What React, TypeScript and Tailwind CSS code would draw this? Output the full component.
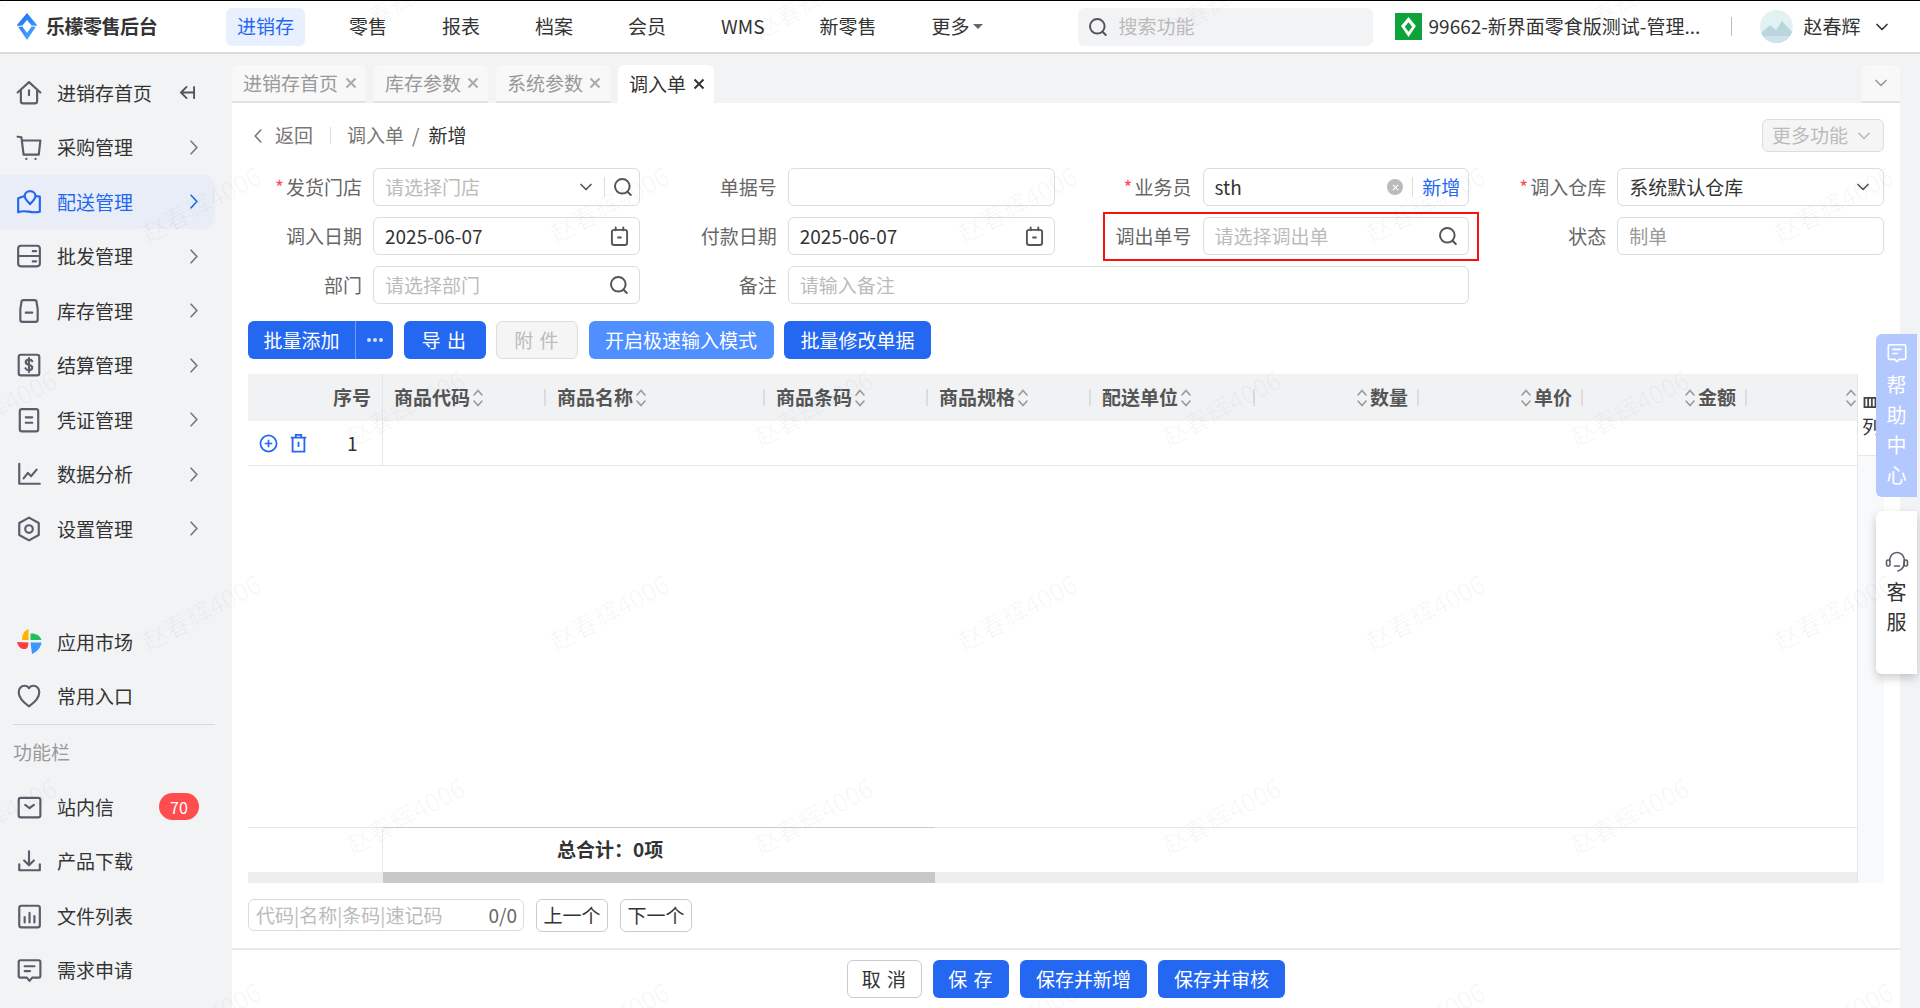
import React from "react";

const stroke = {
  fill: "none",
  stroke: "currentColor",
  strokeWidth: 2,
  strokeLinecap: "round" as const,
  strokeLinejoin: "round" as const,
};

const Svg = ({ children, className = "-ml-[1px] size-[26px]" }: { children: React.ReactNode; className?: string }) => (
  <svg viewBox="0 0 24 24" className={className} {...stroke}>
    {children}
  </svg>
);

const Chevron = ({ className = "size-[20px]" }: { className?: string }) => (
  <Svg className={className}>
    <path d="M6 9l6 6 6-6" />
  </Svg>
);

const ChevronRight = () => (
  <svg viewBox="0 0 12 20" className="h-[17px] w-[10px]" {...stroke}>
    <path d="M2.5 2.5l7 7.5-7 7.5" />
  </svg>
);

const Search = ({ className = "size-[20px]" }: { className?: string }) => (
  <svg viewBox="0 0 20 20" className={className} {...stroke}>
    <circle cx="9.3" cy="9.3" r="7.3" />
    <path d="M14.8 15l3 3" />
  </svg>
);

const Calendar = () => (
  <svg viewBox="0 0 20 22" className="h-[21px] w-[19px]" {...stroke}>
    <rect x="2" y="4" width="16" height="16" rx="2.5" />
    <path d="M6 1.5v3M14 1.5v3M8.5 12h3" />
  </svg>
);

const Close = ({ className = "" }: { className?: string }) => (
  <svg viewBox="0 0 12 12" className={`size-[12px] ${className}`} fill="none" stroke="currentColor" strokeWidth="2">
    <path d="M1.5 1.5l9 9M10.5 1.5l-9 9" />
  </svg>
);

const Sort = () => (
  <svg viewBox="0 0 11 20" className="h-[20px] w-[12px] shrink-0 text-[#999]" fill="none" stroke="currentColor" strokeWidth="1.6" strokeLinecap="round">
    <path d="M1.5 7l4-4.500 4 4.500M1.500 13l4 4.500 4-4.500" />
  </svg>
);

const icons: Record<string, React.ReactNode> = {
  home: <path d="M1.500 11.500L12 2l10.500 9.500M4.500 9.500v10a2 2 0 002 2h11a2 2 0 002-2v-10M12 9.500v4.500" />,
  cart: (
    <>
      <path d="M1.500 2.500l3.500.5 2 16h14l1.500-13H6" />
      <path d="M9.500 23h.1M18 23h.1" />
    </>
  ),
  map: (
    <>
      <path d="M8 6.500L2 8.500v13c7-3 11 1.500 20-.5V7l-4-.5" />
      <path d="M13 2c2.800 0 5 2 5 4.500 0 2.700-2.700 5-5 7.500-2.300-2.500-5-4.800-5-7.500C8 4 10.200 2 13 2z" />
    </>
  ),
  server: (
    <>
      <rect x="2" y="2.500" width="20" height="19" rx="2.500" />
      <path d="M2 12h20M15.500 7.500h3M15.500 17h3" />
    </>
  ),
  box: (
    <>
      <path d="M4 10l1-6a2 2 0 012-2h10a2 2 0 012 2l1 6v10a2 2 0 01-2 2H6a2 2 0 01-2-2z" />
      <path d="M9 13.500h6" />
    </>
  ),
  dollar: (
    <>
      <rect x="2.500" y="2.500" width="19" height="19" rx="2" />
      <path d="M15 8.500c-.5-1-1.500-1.500-3-1.500-2 0-3 1-3 2.400 0 3.100 6 1.800 6 5 0 1.500-1.300 2.400-3 2.400-1.600 0-2.700-.6-3.200-1.700M12 5.500v13" />
    </>
  ),
  doc: (
    <>
      <rect x="3.500" y="2" width="17" height="20.500" rx="2" />
      <path d="M9 9.500h6M9 14.500h6" />
    </>
  ),
  chart: <path d="M3 2.500V21h19M7 16l4-5 3 3 5-6" />,
  gear: (
    <>
      <path d="M12 1.500l9 5v11l-9 5-9-5v-11z" />
      <circle cx="12" cy="12" r="3.500" />
    </>
  ),
  heart: <path d="M12 21.500C7 18 2.500 13.500 2.500 8.500 2.500 5 5 2.500 8 2.500c1.700 0 3.200.8 4 2.300.8-1.500 2.300-2.300 4-2.300 3 0 5.500 2.500 5.500 6 0 5-4.500 9.500-9.500 13z" />,
  mail: (
    <>
      <rect x="2.500" y="3.500" width="20" height="18" rx="2" />
      <path d="M8.500 10l4 3 4-3" />
    </>
  ),
  download: <path d="M12 3v13M7.500 11.500L12 16l4.500-4.500M3 15v5.500h19V15" />,
  bars: (
    <>
      <rect x="3" y="2.500" width="19" height="20" rx="2" />
      <path d="M8 13v5M12.500 9v9M17 12v6" />
    </>
  ),
  comment: (
    <>
      <path d="M4 3h17a1.500 1.500 0 011.500 1.500v13A1.500 1.500 0 0121 19h-6l-2.500 3L10 19H4a1.500 1.500 0 01-1.500-1.500v-13A1.500 1.500 0 014 3z" />
      <path d="M8 8.500h9M8 13h5" />
    </>
  ),
};

const Pinwheel = () => (
  <svg viewBox="0 0 25 25" className="size-[25px]">
    <path d="M11.500 11V0C7 1.500 5 6 5 11z" fill="#ffb300" />
    <path d="M13.500 11V4.500c4.500-.5 9.500 1.500 11 6.500z" fill="#22c05a" />
    <path d="M13.500 13.500H24.500c-.5 4.500-4 9-9.500 11.500z" fill="#3a98ff" />
    <path d="M11.500 13.500c0 3-1 6-3 6.500-3.500.5-7-1-8.500-7z" fill="#ff3b3b" />
  </svg>
);

// same leaf mark is used by both logos, hollow diamond in the middle
const leaf = "M10 0L20 12 10 27 0 12zM10 7L5 13l5 7 5-7z";

const menu = [
  { key: "home", label: "进销存首页", collapse: true },
  { key: "cart", label: "采购管理" },
  { key: "map", label: "配送管理", active: true },
  { key: "server", label: "批发管理" },
  { key: "box", label: "库存管理" },
  { key: "dollar", label: "结算管理" },
  { key: "doc", label: "凭证管理" },
  { key: "chart", label: "数据分析" },
  { key: "gear", label: "设置管理" },
];

const SideItem = ({
  icon,
  label,
  active,
  arrow,
  children,
}: {
  icon: React.ReactNode;
  label: string;
  active?: boolean;
  arrow?: boolean;
  children?: React.ReactNode;
}) => (
  <div
    className={`flex h-[54.500px] w-[215px] items-center rounded-r-xl pl-[17px] ${
      active ? "bg-[#e8edf7] text-[#2468f2]" : "text-[#333]"
    }`}
  >
    <span className={`flex w-[40px] shrink-0 ${active ? "" : "text-[#5a5e6b]"}`}>{icon}</span>
    <span className="flex-1">{label}</span>
    {children}
    {arrow && (
      <span className={`mr-[16px] ${active ? "text-[#2468f2]" : "text-[#777]"}`}>
        <ChevronRight />
      </span>
    )}
  </div>
);

const Sidebar = () => (
  <aside className="flex w-[232px] shrink-0 flex-col bg-[#f2f3f5] pt-[11.500px]">
    {menu.map((m) => (
      <SideItem key={m.key} icon={<Svg>{icons[m.key]}</Svg>} label={m.label} active={m.active} arrow={!m.collapse}>
        {m.collapse && (
          <svg viewBox="0 0 18 16" className="mr-[19px] h-[15px] w-[17px] text-[#555]" {...stroke}>
            <path d="M8 2L2 8l6 6M2 8h13M16 2v12" />
          </svg>
        )}
      </SideItem>
    ))}
    <div className="h-[58.500px]" />
    <SideItem icon={<Pinwheel />} label="应用市场" />
    <SideItem icon={<Svg>{icons.heart}</Svg>} label="常用入口" />
    <div className="ml-[13px] h-px w-[202px] bg-[#d9d9d9]" />
    <div className="flex h-[55px] items-center pl-[13px] text-[#999]">功能栏</div>
    <SideItem icon={<Svg>{icons.mail}</Svg>} label="站内信">
      <span className="mr-[16px] flex h-[27px] w-[40px] items-center justify-center rounded-full bg-[#ff4d4f] text-[16px] text-white">
        70
      </span>
    </SideItem>
    <SideItem icon={<Svg>{icons.download}</Svg>} label="产品下载" />
    <SideItem icon={<Svg>{icons.bars}</Svg>} label="文件列表" />
    <SideItem icon={<Svg>{icons.comment}</Svg>} label="需求申请" />
  </aside>
);

const navItems = ["零售", "报表", "档案", "会员", "WMS", "新零售"];

const Header = () => (
  <header className="flex h-[54px] shrink-0 items-center border-t border-b-2 border-t-black border-b-[#dcdcdc] bg-white pl-[17px]">
    <svg viewBox="0 0 20 27" className="h-[27px] w-[20px] shrink-0">
      <defs>
        <linearGradient id="logo" x1="0" y1="0" x2="0.6" y2="1">
          <stop offset="0" stopColor="#1f66ee" />
          <stop offset="1" stopColor="#46a6ff" />
        </linearGradient>
      </defs>
      <path d={leaf} fill="url(#logo)" fillRule="evenodd" />
      <path d="M0 13.500l5-.5M20 13.500l-5-.5" stroke="#fff" strokeWidth="1.200" />
    </svg>
    <span className="ml-[9px] w-[180px] text-[19px] font-bold tracking-tight text-[#333]">乐檬零售后台</span>
    <nav className="flex items-center gap-[33px]">
      <span className="flex h-[38px] items-center rounded-md bg-[#e8effd] px-[11px] text-[#2468f2]">进销存</span>
      {navItems.map((n) => (
        <span key={n} className="px-[11px] text-[#333]">
          {n}
        </span>
      ))}
      <span className="flex items-center px-[11px] text-[#333]">
        更多
        <span className="ml-[3px] size-0 border-x-[5px] border-t-[5px] border-x-transparent border-t-[#666]" />
      </span>
    </nav>
    <div className="ml-[84px] flex h-[38px] w-[295px] items-center gap-[11px] rounded-md bg-[#f2f3f5] pl-[10px] text-[#bbb]">
      <span className="text-[#555]">
        <Search />
      </span>
      搜索功能
    </div>
    <span className="ml-[22px] flex size-[27px] items-center justify-center bg-[#0ea33a]">
      <svg viewBox="0 0 20 27" className="h-[20px] w-[15px]">
        <path d={leaf} fill="#fff" fillRule="evenodd" />
      </svg>
    </span>
    <span className="ml-[7px] w-[271px] whitespace-nowrap text-[#333]">99662-新界面零食版测试-管理...</span>
    <span className="ml-[31px] h-[19px] w-px bg-[#bbb]" />
    <svg viewBox="0 0 33 33" className="ml-[28px] size-[33px]">
      <defs>
        <clipPath id="avatar">
          <circle cx="16.500" cy="16.500" r="16.500" />
        </clipPath>
      </defs>
      <g clipPath="url(#avatar)">
        <rect width="33" height="33" fill="#e4f1f2" />
        <path d="M0 24l10-9 6 5 6-9 11 12v10H0z" fill="#b9d6de" />
        <rect y="26" width="33" height="7" fill="#cfe4ea" />
      </g>
    </svg>
    <span className="ml-[11px] text-[#333]">赵春辉</span>
    <span className="ml-[11px] text-[#333]">
      <Chevron />
    </span>
  </header>
);

const tabs = [
  { label: "进销存首页", w: "w-[134px]" },
  { label: "库存参数", w: "w-[114px]" },
  { label: "系统参数", w: "w-[114px]" },
];

const Tabs = () => (
  <div className="flex h-[38px] shrink-0 items-stretch gap-[8px]">
    {tabs.map((t) => (
      <div
        key={t.label}
        className={`flex ${t.w} items-center justify-between rounded-t-md border-b-2 border-[#e2e2e2] bg-[#f8f8f8] pl-[11px] pr-[9px] text-[#999]`}
      >
        {t.label}
        <Close className="text-[#aaa]" />
      </div>
    ))}
    <div className="flex w-[96px] items-center justify-between rounded-t-md bg-white pl-[11px] pr-[9px] text-[#333]">
      调入单
      <Close className="text-[#333]" />
    </div>
    <div className="ml-auto flex w-[38px] items-center justify-center rounded-t-md border-b-2 border-[#e2e2e2] bg-[#f8f8f8] text-[#999]">
      <Chevron />
    </div>
  </div>
);

const Field = ({
  label,
  required,
  span,
  children,
  tight,
}: {
  label: string;
  required?: boolean;
  span?: boolean;
  children: React.ReactNode;
  tight?: boolean;
}) => (
  <div className={`flex items-stretch ${span ? "col-span-2" : ""}`}>
    <label className="mr-[11px] flex w-[114px] shrink-0 items-center justify-end text-[#666]">
      {required && <span className="mr-[2px] text-[#ff4d4f]">*</span>}
      {label}
    </label>
    <div className={`flex min-w-0 flex-1 items-center rounded-md border border-[#dcdcdc] bg-white pl-[11px] ${tight ? "pr-[6px]" : "pr-[10px]"}`}>
      {children}
    </div>
  </div>
);

const Placeholder = ({ children }: { children?: React.ReactNode }) => (
  <span className="flex-1 text-[#bbb]">{children}</span>
);
const Value = ({ children }: { children: React.ReactNode }) => <span className="flex-1 text-[#333]">{children}</span>;
const Muted = ({ children }: { children: React.ReactNode }) => <span className="text-[#555]">{children}</span>;

const Form = () => (
  <div className="mt-4 grid grid-cols-4 grid-rows-[38px_38px_38px] gap-x-[23px] gap-y-[11px]">
    <Field label="发货门店" required tight>
      <Placeholder>请选择门店</Placeholder>
      <Muted>
        <Chevron />
      </Muted>
      <span className="mx-[8px] h-[20px] w-px bg-[#ddd]" />
      <Muted>
        <Search />
      </Muted>
    </Field>
    <Field label="单据号">
      <Placeholder />
    </Field>
    <Field label="业务员" required>
      <Value>sth</Value>
      <span className="flex size-[16px] items-center justify-center rounded-full bg-[#bbb] text-white">
        <Close className="!size-[7px]" />
      </span>
      <span className="mx-[9px] h-[20px] w-px bg-[#ddd]" />
      <span className="-mr-[2px] text-[#2468f2]">新增</span>
    </Field>
    <Field label="调入仓库" required>
      <Value>系统默认仓库</Value>
      <Muted>
        <Chevron />
      </Muted>
    </Field>
    <Field label="调入日期">
      <Value>2025-06-07</Value>
      <Muted>
        <Calendar />
      </Muted>
    </Field>
    <Field label="付款日期">
      <Value>2025-06-07</Value>
      <Muted>
        <Calendar />
      </Muted>
    </Field>
    <div className="relative flex flex-col">
      <div className="flex flex-1 items-stretch">
        <label className="mr-[11px] flex w-[114px] shrink-0 items-center justify-end text-[#666]">调出单号</label>
        <div className="flex min-w-0 flex-1 items-center rounded-md border border-[#dcdcdc] bg-white pl-[11px] pr-[10px]">
          <Placeholder>请选择调出单</Placeholder>
          <Muted>
            <Search />
          </Muted>
        </div>
      </div>
      <div className="pointer-events-none absolute -bottom-[6px] -right-[10px] -top-[5px] left-[25px] border-[2.500px] border-[#f5130d]" />
    </div>
    <Field label="状态">
      <span className="text-[#999]">制单</span>
    </Field>
    <Field label="部门">
      <Placeholder>请选择部门</Placeholder>
      <Muted>
        <Search />
      </Muted>
    </Field>
    <Field label="备注" span>
      <Placeholder>请输入备注</Placeholder>
    </Field>
  </div>
);

const Btn = ({
  children,
  className = "",
  variant = "primary",
}: {
  children: React.ReactNode;
  className?: string;
  variant?: "primary" | "light" | "disabled" | "outline";
}) => {
  const styles = {
    primary: "bg-[#2468f2] text-white",
    light: "bg-[#4f8fff] text-white",
    disabled: "border border-[#ddd] bg-[#f5f5f5] text-[#bbb]",
    outline: "border border-[#ccc] bg-white text-[#333]",
  };
  return (
    <button className={`flex h-[38px] items-center justify-center whitespace-pre rounded-md ${styles[variant]} ${className}`}>
      {children}
    </button>
  );
};

const Toolbar = () => (
  <div className="mt-[17px] flex gap-[10.500px]">
    <div className="flex h-[38px] w-[145px] overflow-hidden rounded-md bg-[#2468f2] text-white">
      <span className="flex w-[108px] items-center justify-center border-r border-[#6f9cf7]">批量添加</span>
      <span className="flex flex-1 items-center justify-center gap-[2px]">
        <i className="size-[4px] rounded-full bg-white/80" />
        <i className="size-[4px] rounded-full bg-white/80" />
        <i className="size-[4px] rounded-full bg-white/80" />
      </span>
    </div>
    <Btn className="w-[82px] tracking-[1px]">导 出</Btn>
    <Btn className="w-[82px] tracking-[1px]" variant="disabled">
      附 件
    </Btn>
    <Btn className="w-[185px]" variant="light">
      开启极速输入模式
    </Btn>
    <Btn className="w-[147px]">批量修改单据</Btn>
  </div>
);

const columns = [
  { label: "商品代码", w: "w-[163px]" },
  { label: "商品名称", w: "w-[219px]" },
  { label: "商品条码", w: "w-[163px]" },
  { label: "商品规格", w: "w-[163px]" },
  { label: "配送单位", w: "w-[164px]" },
  { label: "数量", w: "w-[164px]", right: true },
  { label: "单价", w: "w-[164px]", right: true },
  { label: "金额", w: "w-[164px]", right: true },
];

const Table = () => (
  <div className="mt-[15px] flex h-[509px]">
    <div className="flex w-[1609px] shrink-0 flex-col overflow-hidden">
      <div className="flex h-[47px] shrink-0 items-center bg-[#f1f2f4] font-bold text-[#555]">
        <div className="flex h-full w-[135px] shrink-0 items-center justify-end border-r border-[#e6e6e6] pr-[11px]">序号</div>
        {columns.map((c) => (
          <div key={c.label} className={`flex ${c.w} shrink-0 items-center justify-between pl-[11px]`}>
            {c.right ? (
              <span className="ml-auto flex items-center gap-[2px] pr-[9px]">
                <Sort />
                {c.label}
              </span>
            ) : (
              <span className="flex items-center gap-[2px]">
                {c.label}
                <Sort />
              </span>
            )}
            <span className="h-[17px] w-[2px] bg-[#ddd]" />
          </div>
        ))}
        <div className="flex flex-1 justify-end">
          <Sort />
        </div>
      </div>
      <div className="flex h-[45px] shrink-0 border-b border-[#e8e8e8]">
        <div className="flex w-[135px] shrink-0 items-center border-r border-[#e6e6e6] pl-[11px] text-[#2468f2]">
          <svg viewBox="0 0 20 20" className="size-[19px]" fill="none" stroke="currentColor" strokeWidth="1.800">
            <circle cx="10" cy="10" r="8.500" />
            <path d="M10 6v8M6 10h8" />
          </svg>
          <svg viewBox="0 0 20 22" className="ml-[11px] h-[20px] w-[19px]" fill="none" stroke="currentColor" strokeWidth="2">
            <path d="M1.500 5h17M7 5V2h6v3M3.500 5v15.500h13V5M10 9.500v6" />
          </svg>
          <span className="ml-[39px] text-[#333]">1</span>
        </div>
      </div>
      <div className="flex-1" />
      <div className="flex h-[45px] shrink-0">
        <div className="w-[135px] shrink-0 border-r border-t border-[#e8e8e8]" />
        <div className="flex flex-1 flex-col">
          <div className="flex h-px shrink-0">
            <div className="w-[552px] bg-[#ccc]" />
            <div className="flex-1 bg-[#e8e8e8]" />
          </div>
          <div className="flex flex-1 items-center pb-[2px] pl-[174px] font-bold text-[#333]">总合计：0项</div>
        </div>
      </div>
      <div className="flex h-[11px] shrink-0 bg-[#eee]">
        <div className="ml-[135px] w-[552px] bg-[#c8c8c8]" />
      </div>
    </div>
    <div className="flex w-[27px] flex-col overflow-hidden border-l border-[#e6e6e6]">
      <div className="flex h-[82px] shrink-0 flex-col items-start border-b border-[#e8e8e8] bg-white pl-[4px] pt-[23px]">
        <svg viewBox="0 0 14 12" className="ml-[1px] h-[11px] w-[14px] shrink-0" fill="none" stroke="#444" strokeWidth="2">
          <path d="M1 1h12v10H1zM5 1v10M9 1v10" />
        </svg>
        <span className="mt-[3px] whitespace-nowrap leading-[30px] text-[#333]">列</span>
      </div>
      <div className="flex-1 bg-[#f8f9fb]" />
    </div>
  </div>
);

const Pager = () => (
  <div className="mt-4 flex h-[32px] gap-[12px]">
    <div className="flex w-[276px] items-center justify-between rounded-md border border-[#dcdcdc] pl-[7px] pr-[6px] text-[#bbb]">
      代码|名称|条码|速记码
      <span className="text-[#666]">0/0</span>
    </div>
    <Btn className="!h-[33px] w-[72px]" variant="outline">
      上一个
    </Btn>
    <Btn className="!h-[33px] w-[72px]" variant="outline">
      下一个
    </Btn>
  </div>
);

const Footer = () => (
  <div className="mt-[17px] flex flex-1 justify-center gap-[11px] border-t-2 border-[#e8e8e8] pt-[10px]">
    <Btn className="w-[75px] tracking-[1px]" variant="outline">
      取 消
    </Btn>
    <Btn className="w-[76px] tracking-[1px]">保 存</Btn>
    <Btn className="w-[127px]">保存并新增</Btn>
    <Btn className="w-[127px]">保存并审核</Btn>
  </div>
);

const FloatTabs = () => (
  <div className="absolute right-[3px] top-[334px] flex w-[41px] flex-col gap-[14px]">
    <div className="flex h-[163px] flex-col items-center justify-center rounded-l-md bg-[#b3c8ff] pt-[1px] text-[20px] leading-[30px] text-white">
      <svg viewBox="0 0 24 24" className="mb-[6px] size-[22px]" {...stroke} strokeWidth={1.800}>
        <path d="M4 3h16a1.500 1.500 0 011.500 1.500v13A1.500 1.500 0 0120 19h-6l-2 2.500L10 19H4a1.500 1.500 0 01-1.500-1.500v-13A1.500 1.500 0 014 3z" />
        <path d="M7.500 8h9M7.500 12.500h5" />
      </svg>
      <span>帮</span>
      <span>助</span>
      <span>中</span>
      <span>心</span>
    </div>
    <div className="flex h-[163px] flex-col items-center justify-center rounded-l-md bg-white pt-[2px] text-[20px] leading-[30px] text-[#333] shadow-[0_4px_10px_rgba(0,0,0,0.2)]">
      <svg viewBox="0 0 24 24" className="mb-[3px] size-[24px] text-[#5a5e6b]" {...stroke} strokeWidth={1.600}>
        <path d="M4.500 11C4.500 6.500 7.500 2.500 12 2.500s7.500 4 7.500 8.500c0 5-2.500 9-6.500 10" />
        <rect x="1.500" y="10" width="3.500" height="6" rx="1.500" />
        <rect x="19" y="10" width="3.500" height="6" rx="1.500" />
        <path d="M9.500 16h5" />
      </svg>
      <span>客</span>
      <span>服</span>
    </div>
  </div>
);

const marks = [0, 204, 408, 612, 816, 1020].flatMap((y, r) =>
  [0, 1, 2, 3, 4, 5].map((c) => ({ x: (r % 2 ? 201 : -3) + c * 408, y })),
);

const Watermark = () => (
  <div className="pointer-events-none absolute inset-0 overflow-hidden">
    {marks.map((m) => (
      <span
        key={`${m.x}-${m.y}`}
        className="absolute -translate-x-1/2 -translate-y-1/2 -rotate-[28deg] whitespace-nowrap text-[25px] text-black/[0.035]"
        style={{ left: m.x, top: m.y }}
      >
        赵春辉4006
      </span>
    ))}
  </div>
);

export default function App() {
  return (
    <div className="relative flex h-[1008px] w-[1920px] flex-col overflow-hidden bg-[#f2f3f5] text-[19px] [font-family:'Noto_Sans_CJK_SC',sans-serif]">
      <Header />
      <div className="flex min-h-0 flex-1">
        <Sidebar />
        <main className="flex w-[1668px] shrink-0 flex-col pt-[11px]">
          <Tabs />
          <div className="flex flex-1 flex-col bg-white">
            <div className="flex flex-col px-4 pt-4">
              <div className="flex h-[33px] items-center">
                <span className="ml-[5px] text-[#777]">
                  <svg viewBox="0 0 12 20" className="h-[16px] w-[10px]" {...stroke}>
                    <path d="M9.500 2.500l-7 7.500 7 7.500" />
                  </svg>
                </span>
                <span className="ml-[12px] text-[#777]">返回</span>
                <span className="ml-[17px] h-[17px] w-px bg-[#ddd]" />
                <span className="ml-[16px] text-[#777]">调入单</span>
                <span className="ml-[8px] text-[#777]">/</span>
                <span className="ml-[9px] text-[#333]">新增</span>
                <Btn className="ml-auto !h-[33px] w-[122px] gap-[6px]" variant="disabled">
                  更多功能
                  <Chevron />
                </Btn>
              </div>
              <Form />
              <Toolbar />
              <Table />
              <Pager />
            </div>
            <Footer />
          </div>
        </main>
      </div>
      <FloatTabs />
      <Watermark />
    </div>
  );
}
